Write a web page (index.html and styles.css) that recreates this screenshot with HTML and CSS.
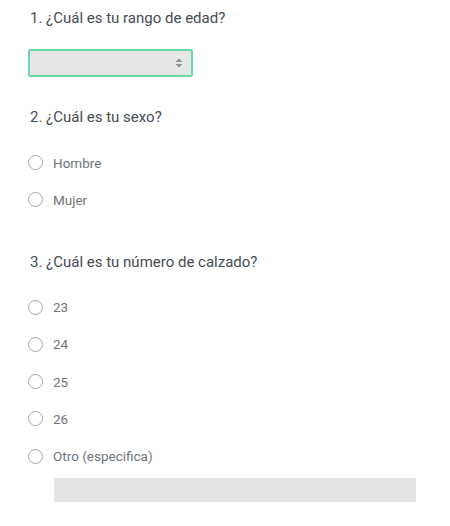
FILE: index.html
```html
<!DOCTYPE html>
<html lang="es">
<head>
<meta charset="UTF-8" />
<meta name="viewport" content="width=device-width, initial-scale=1.0"/>
<title>Encuesta</title>
<link rel="stylesheet" href="styles.css">
</head>
<body>
<main class="survey">
    <div class="question q-age">
        <h2 class="q-title">1. ¿Cuál es tu rango de edad?</h2>
        <div class="select-box">
            <span class="select-arrows">
                <svg width="8" height="10" viewBox="0 0 8 10"><path d="M4 0.5 L7.5 4 L0.5 4 Z M4 9.5 L7.5 6 L0.5 6 Z" fill="#8a9096"/></svg>
            </span>
        </div>
    </div>

    <div class="question q-sex">
        <h2 class="q-title">2. ¿Cuál es tu sexo?</h2>
        <div class="options">
            <label class="option"><span class="radio"></span>Hombre</label>
            <label class="option"><span class="radio"></span>Mujer</label>
        </div>
    </div>

    <div class="question q-shoe">
        <h2 class="q-title">3. ¿Cuál es tu número de calzado?</h2>
        <div class="options">
            <label class="option"><span class="radio"></span>23</label>
            <label class="option"><span class="radio"></span>24</label>
            <label class="option"><span class="radio"></span>25</label>
            <label class="option"><span class="radio"></span>26</label>
            <label class="option"><span class="radio"></span>Otro (especifica)</label>
        </div>
        <div class="other-input"></div>
    </div>
</main>
</body>
</html>
```

FILE: styles.css
```css
body {
    margin: 0;
    font-family: Roboto, "Liberation Sans", sans-serif;
    background: #fff;
}
.survey {
    padding: 8px 0 0 30px;
}
.q-title {
    margin: 0;
    font-size: 15px;
    font-weight: 400;
    line-height: 20px;
    color: #454c52;
}
.select-box {
    margin: 21px 0 0 -2px;
    width: 161px;
    height: 24px;
    border: 2px solid #6ad8a9;
    border-radius: 2px;
    background: #e6e6e6;
    display: flex;
    align-items: center;
    justify-content: flex-end;
}
.select-arrows {
    display: flex;
    margin-right: 8px;
}
.q-sex {
    margin-top: 30px;
}
.q-shoe {
    margin-top: 33px;
}
.options {
    margin-top: 17px;
}
.option {
    display: flex;
    align-items: center;
    height: 37.25px;
    font-size: 13.5px;
    color: #6f757b;
}
.radio {
    width: 13px;
    height: 13px;
    border: 1px solid #a3a8ac;
    border-radius: 50%;
    margin: 0 10px 0 -2px;
    box-sizing: content-box;
}
.other-input {
    margin: 3px 0 0 24px;
    width: 362px;
    height: 24px;
    background: #e4e4e4;
}
```
